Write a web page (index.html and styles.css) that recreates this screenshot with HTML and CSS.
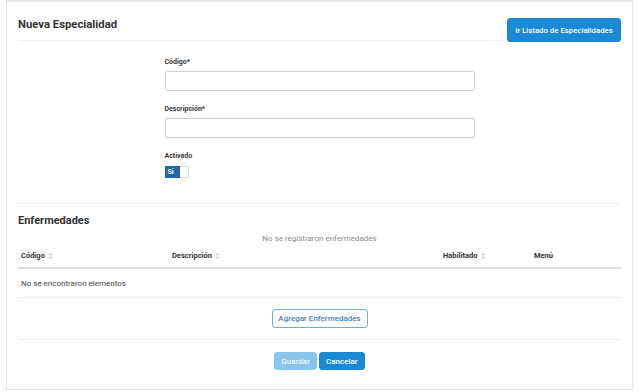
FILE: index.html
```html
<!DOCTYPE html>
<html lang="es">
  <head>
    <meta charset="UTF-8" />
    <link rel="stylesheet" href="styles.css">
  </head>
  <body>
    <div class="card">
      <div class="header">
        <h2>Nueva Especialidad</h2>
        <button class="btn btnPrimary btnList">Ir Listado de Especialidades</button>
      </div>

      <div class="form">
        <label>Código*</label>
        <input type="text" />
        <label>Descripción*</label>
        <input type="text" />
        <label>Activado</label>
        <div class="toggle">
          <span class="on">Si</span>
          <span class="off"></span>
        </div>
      </div>

      <div class="section">
        <h3>Enfermedades</h3>
        <p class="empty">No se registraron enfermedades</p>
        <div class="table">
          <div class="row head">
            <div class="cell">Código <svg class="sort" viewBox="0 0 6 10"><path d="M3 1L5.5 4H0.5Z M3 9L0.5 6H5.5Z"/></svg></div>
            <div class="cell">Descripción <svg class="sort" viewBox="0 0 6 10"><path d="M3 1L5.5 4H0.5Z M3 9L0.5 6H5.5Z"/></svg></div>
            <div class="cell">Habilitado <svg class="sort" viewBox="0 0 6 10"><path d="M3 1L5.5 4H0.5Z M3 9L0.5 6H5.5Z"/></svg></div>
            <div class="cell">Menú</div>
          </div>
          <div class="row body">
            <div class="cell full">No se encontraron elementos</div>
          </div>
        </div>
        <div class="addRow">
          <button class="btn btnOutline">Agregar Enfermedades</button>
        </div>
      </div>

      <div class="actions">
        <button class="btn btnDisabled">Guardar</button>
        <button class="btn btnPrimary">Cancelar</button>
      </div>
    </div>
  </body>
</html>
```

FILE: styles.css
```css
body {
  margin: 0;
  background-color: #ffffff;
  font-family: "Roboto", "Liberation Sans", sans-serif;
  color: #333333;
}
.card {
  margin: 0 7px 0 6px;
  height: 390px;
  border: 1px solid #e4e4e4;
  border-top: 2px solid #e4e4e4;
  padding: 0 11px;
  box-sizing: border-box;
  width: 627px;
}
.card .header {
  display: flex;
  justify-content: space-between;
  align-items: flex-start;
  height: 22px;
  padding-top: 16px;
  border-bottom: 1px solid #f0f0f0;
}
.card .header h2 {
  margin: 0;
  font-size: 11.3px;
  line-height: 14px;
  font-weight: 700;
  color: #333333;
}
.btn {
  font-family: "Roboto", "Liberation Sans", sans-serif;
  font-size: 8px;
  font-weight: 500;
  border-radius: 3px;
  cursor: pointer;
  padding: 0 6px;
  white-space: nowrap;
}
.btnPrimary {
  background-color: #1a8ad4;
  border: 1px solid #1a84cc;
  color: #ffffff;
}
.btnList {
  height: 24px;
  padding: 0;
  font-size: 7.8px;
  width: 114px;
}
.btnDisabled {
  background-color: #8ac6ec;
  border: 1px solid #8ac6ec;
  color: #eef7fd;
}
.btnOutline {
  background-color: #ffffff;
  border: 1px solid #6aaede;
  color: #4a7fb5;
  height: 19px;
  width: 96px;
  padding: 0;
}
.card .form {
  width: 310px;
  margin: 0 auto;
  padding-top: 16px;
  display: flex;
  flex-direction: column;
  height: 162px;
  box-sizing: border-box;
}
.card .form label {
  font-size: 7px;
  font-weight: 700;
  line-height: 10px;
  margin-bottom: 4px;
  color: #3a3a3a;
}
.card .form input {
  height: 20px;
  flex-shrink: 0;
  box-sizing: border-box;
  border: 1px solid #cfcfcf;
  border-radius: 3px;
  margin: 0 0 13px 0;
}
.card .form .toggle {
  display: flex;
  width: 24px;
  height: 12px;
  margin-top: 1px;
  flex-shrink: 0;
}
.card .form .toggle .on {
  width: 15px;
  background-color: #2368a4;
  color: #ffffff;
  font-size: 7px;
  font-weight: 700;
  line-height: 12px;
  padding-left: 3px;
  box-sizing: border-box;
}
.card .form .toggle .off {
  flex: 1;
  border: 1px solid #dddddd;
  border-left: none;
  background-color: #ffffff;
}
.card .section {
  border-top: 1px solid #f0f0f0;
  padding-top: 10px;
}
.card .section h3 {
  margin: 0;
  font-size: 11px;
  font-weight: 700;
  line-height: 14px;
}
.card .section .empty {
  margin: 6px 0 0 0;
  text-align: center;
  font-size: 8px;
  line-height: 10px;
  color: #8a8a8a;
}
.table .row {
  display: grid;
  grid-template-columns: 151px 271px 91px 1fr;
}
.table .head {
  height: 23px;
  border-bottom: 2px solid #dddddd;
  align-items: center;
}
.table .cell {
  padding-left: 3px;
  font-size: 7.5px;
}
.table .head .cell {
  font-weight: 700;
  display: flex;
  align-items: center;
  gap: 3px;
}
.table .sort {
  width: 5px;
  height: 8px;
  fill: #d0d0d0;
}
.table .body {
  height: 28px;
  border-bottom: 1px solid #eeeeee;
  align-items: center;
}
.table .cell.full {
  grid-column: 1 / 5;
  font-size: 8px;
  color: #444444;
}
.card .addRow {
  display: flex;
  justify-content: center;
  padding: 11px 0 11px 0;
  border-bottom: 1px solid #eeeeee;
}
.card .actions {
  display: flex;
  justify-content: center;
  gap: 2px;
  padding-top: 12px;
}
.card .actions .btn {
  height: 18px;
  padding: 0 6px;
}
```
